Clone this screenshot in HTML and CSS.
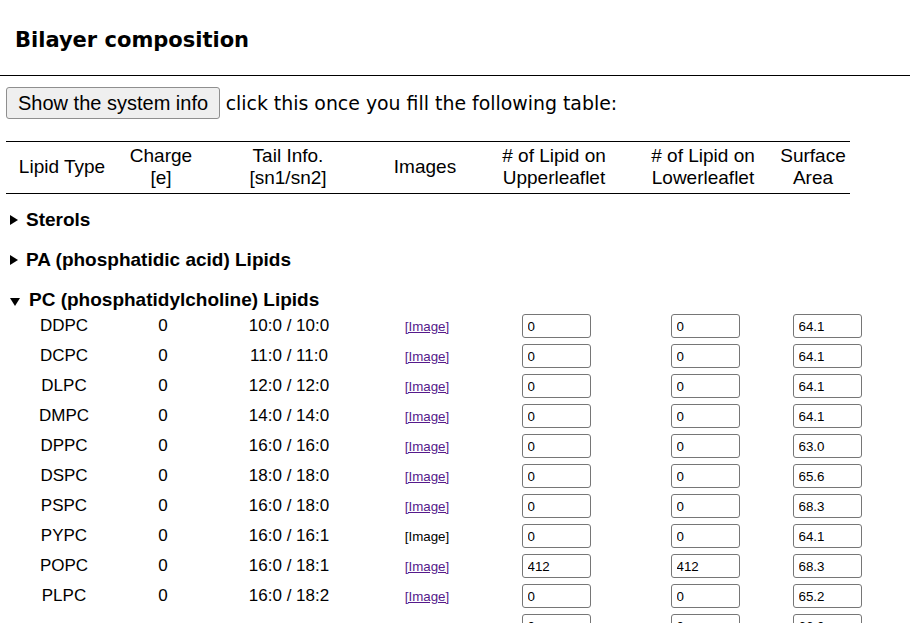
FILE: index.html
```html
<!DOCTYPE html>
<html>
<head>
<meta charset="utf-8">
<title>Bilayer composition</title>
<link rel="stylesheet" href="styles.css">
</head>
<body>
<div class="topbar"><h1 class="title">Bilayer composition</h1></div>
<div class="actions"><button class="btn">Show the system info</button> <span class="hint">click this once you fill the following table:</span></div>
<table class="head-table">
  <colgroup>
    <col class="h1c"><col class="h2c"><col class="h3c"><col class="h4c"><col class="h5c"><col class="h6c"><col class="h7c">
  </colgroup>
  <tr>
    <th>Lipid Type</th>
    <th>Charge<br>[e]</th>
    <th>Tail Info.<br>[sn1/sn2]</th>
    <th>Images</th>
    <th># of Lipid on<br>Upperleaflet</th>
    <th># of Lipid on<br>Lowerleaflet</th>
    <th>Surface<br>Area</th>
  </tr>
</table>
<div class="groups">
  <details class="group">
    <summary class="group-title">Sterols</summary>
  </details>
  <details class="group">
    <summary class="group-title">PA (phosphatidic acid) Lipids</summary>
  </details>
  <details class="group" open>
    <summary class="group-title">PC (phosphatidylcholine) Lipids</summary>
    <table class="data-table">
      <colgroup>
        <col class="d1c"><col class="d2c"><col class="d3c"><col class="d4c"><col class="d5c"><col class="d6c"><col class="d7c">
      </colgroup>
      <tr><td>DDPC</td><td>0</td><td>10:0 / 10:0</td><td><a class="img-link" href="#">[Image]</a></td><td><input class="num" value="0"></td><td><input class="num" value="0"></td><td><input class="num" value="64.1"></td></tr>
      <tr><td>DCPC</td><td>0</td><td>11:0 / 11:0</td><td><a class="img-link" href="#">[Image]</a></td><td><input class="num" value="0"></td><td><input class="num" value="0"></td><td><input class="num" value="64.1"></td></tr>
      <tr><td>DLPC</td><td>0</td><td>12:0 / 12:0</td><td><a class="img-link" href="#">[Image]</a></td><td><input class="num" value="0"></td><td><input class="num" value="0"></td><td><input class="num" value="64.1"></td></tr>
      <tr><td>DMPC</td><td>0</td><td>14:0 / 14:0</td><td><a class="img-link" href="#">[Image]</a></td><td><input class="num" value="0"></td><td><input class="num" value="0"></td><td><input class="num" value="64.1"></td></tr>
      <tr><td>DPPC</td><td>0</td><td>16:0 / 16:0</td><td><a class="img-link" href="#">[Image]</a></td><td><input class="num" value="0"></td><td><input class="num" value="0"></td><td><input class="num" value="63.0"></td></tr>
      <tr><td>DSPC</td><td>0</td><td>18:0 / 18:0</td><td><a class="img-link" href="#">[Image]</a></td><td><input class="num" value="0"></td><td><input class="num" value="0"></td><td><input class="num" value="65.6"></td></tr>
      <tr><td>PSPC</td><td>0</td><td>16:0 / 18:0</td><td><a class="img-link" href="#">[Image]</a></td><td><input class="num" value="0"></td><td><input class="num" value="0"></td><td><input class="num" value="68.3"></td></tr>
      <tr><td>PYPC</td><td>0</td><td>16:0 / 16:1</td><td><span class="img-plain">[Image]</span></td><td><input class="num" value="0"></td><td><input class="num" value="0"></td><td><input class="num" value="64.1"></td></tr>
      <tr><td>POPC</td><td>0</td><td>16:0 / 18:1</td><td><a class="img-link" href="#">[Image]</a></td><td><input class="num" value="412"></td><td><input class="num" value="412"></td><td><input class="num" value="68.3"></td></tr>
      <tr><td>PLPC</td><td>0</td><td>16:0 / 18:2</td><td><a class="img-link" href="#">[Image]</a></td><td><input class="num" value="0"></td><td><input class="num" value="0"></td><td><input class="num" value="65.2"></td></tr>
      <tr class="more"><td></td><td></td><td></td><td></td><td><input class="num" value="0"></td><td><input class="num" value="0"></td><td><input class="num" value="66.0"></td></tr>
    </table>
  </details>
</div>
</body>
</html>
```
FILE: styles.css
```css
html, body {
  margin: 0;
  padding: 0;
  background: #ffffff;
  color: #000000;
  font-family: "Liberation Sans", Arial, sans-serif;
}

.topbar {
  width: 910px;
  height: 75px;
  border-bottom: 1px solid #000000;
  box-sizing: content-box;
}

.title {
  margin: 0;
  padding: 28px 0 0 15px;
  font-family: "DejaVu Sans", sans-serif;
  font-size: 21px;
  font-weight: bold;
  line-height: normal;
}

.actions {
  padding: 11px 6px 0 6px;
  font-size: 20px;
  line-height: 32px;
  height: 32px;
}

.hint {
  font-family: "DejaVu Sans", sans-serif;
  font-size: 18.9px;
}

.btn {
  font-family: "Liberation Sans", Arial, sans-serif;
  font-size: 20px;
  height: 32px;
  padding: 0 11px;
  border: 1px solid #8f8f8f;
  border-radius: 3px;
  background: #efefef;
  color: #000000;
  vertical-align: top;
  box-sizing: border-box;
}

.head-table {
  margin: 22px 0 0 6px;
  border-collapse: collapse;
  border-top: 1px solid #000000;
  border-bottom: 1px solid #000000;
  table-layout: fixed;
  width: 844px;
}

.head-table th {
  font-weight: normal;
  font-size: 19px;
  line-height: 21.5px;
  padding: 3px 0 5px 0;
  text-align: center;
  vertical-align: middle;
}

.h1c { width: 112px; }
.h2c { width: 86px; }
.h3c { width: 168px; }
.h4c { width: 106px; }
.h5c { width: 152px; }
.h6c { width: 146px; }
.h7c { width: 74px; }

.groups {
  padding: 15px 0 0 6px;
}

.group + .group {
  margin-top: 18px;
}

.group-title {
  display: block;
  list-style: none;
  font-size: 19px;
  font-weight: bold;
  line-height: 22px;
  padding-left: 4px;
  cursor: pointer;
}

.group-title::-webkit-details-marker {
  display: none;
}

.group-title::before {
  content: "";
  display: inline-block;
  width: 0;
  height: 0;
  border-left: 8px solid #000000;
  border-top: 5px solid transparent;
  border-bottom: 5px solid transparent;
  margin-right: 8px;
  vertical-align: 1px;
}

.group[open] > .group-title::before {
  border-left: 5px solid transparent;
  border-right: 5px solid transparent;
  border-top: 8px solid #000000;
  border-bottom: 0;
  margin-right: 9px;
  vertical-align: 0;
}

.data-table {
  border-collapse: collapse;
  table-layout: fixed;
  width: 870px;
}

.data-table td {
  height: 30px;
  padding: 0;
  font-size: 17px;
  text-align: center;
  vertical-align: middle;
}

.d1c { width: 116px; }
.d2c { width: 82px; }
.d3c { width: 170px; }
.d4c { width: 106px; }
.d5c { width: 152px; }
.d6c { width: 146px; }
.d7c { width: 98px; }

.img-link {
  font-size: 13.33px;
  color: #551a8b;
}

.img-plain {
  font-size: 13.33px;
  color: #000000;
}

.num {
  display: block;
  margin: 0 auto;
  width: 69px;
  height: 24px;
  box-sizing: border-box;
  padding: 1px 5px;
  border: 1px solid #767676;
  border-radius: 3px;
  font-family: "Liberation Sans", Arial, sans-serif;
  font-size: 13.33px;
  color: #000000;
  background: #ffffff;
}
```
